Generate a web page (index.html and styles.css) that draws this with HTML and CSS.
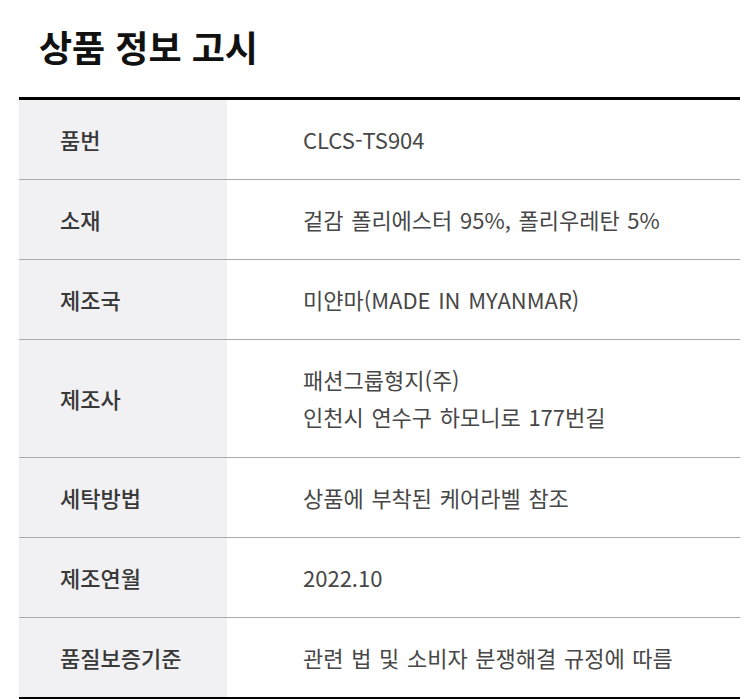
FILE: index.html
```html
<!DOCTYPE html>
<html lang="ko">
<head>
<meta charset="utf-8">
<link rel="stylesheet" href="styles.css">
</head>
<body>
<div class="notice">
  <h2 class="notice-title">상품 정보 고시</h2>
  <table class="info-table">
    <tbody>
      <tr><th>품번</th><td>CLCS-TS904</td></tr>
      <tr><th>소재</th><td>겉감 폴리에스터 95%, 폴리우레탄 5%</td></tr>
      <tr><th>제조국</th><td>미얀마(MADE IN MYANMAR)</td></tr>
      <tr><th>제조사</th><td class="multi">패션그룹형지(주)<br>인천시 연수구 하모니로 177번길</td></tr>
      <tr><th>세탁방법</th><td>상품에 부착된 케어라벨 참조</td></tr>
      <tr><th>제조연월</th><td>2022.10</td></tr>
      <tr><th>품질보증기준</th><td>관련 법 및 소비자 분쟁해결 규정에 따름</td></tr>
    </tbody>
  </table>
</div>
</body>
</html>
```
FILE: styles.css
```css
html, body {
  margin: 0;
  padding: 0;
  background: #fff;
}
body {
  font-family: "Noto Sans CJK KR", "Noto Sans", sans-serif;
}
.notice {
  padding: 20px 16px 0 19px;
}
.notice-title {
  margin: 0 0 0 20px;
  font-size: 36px;
  line-height: 52px;
  font-weight: 700;
  color: #111;
}
.info-table {
  margin-top: 25px;
  width: 721px;
  border-collapse: collapse;
  border-top: 3px solid #000;
  border-bottom: 3px solid #000;
}
.info-table th,
.info-table td {
  font-size: 22px;
  line-height: 36px;
  padding: 21px 0 22px;
  text-align: left;
  vertical-align: middle;
  border-bottom: 1px solid #aaa;
}
.info-table tr:last-child th,
.info-table tr:last-child td {
  border-bottom: none;
}
.info-table th {
  width: 167px;
  padding-left: 41px;
  background: #f1f1f3;
  color: #383838;
  font-weight: 500;
}
.info-table td {
  padding-left: 76px;
  color: #474747;
  font-weight: 400;
  word-spacing: 1.5px;
}
.info-table td.multi {
  line-height: 37px;
}
```
